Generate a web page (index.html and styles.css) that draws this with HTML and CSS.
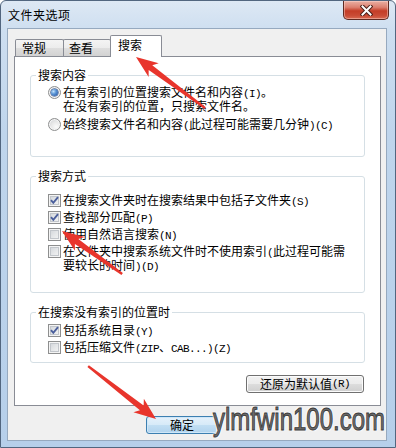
FILE: index.html
```html
<!DOCTYPE html>
<html lang="zh-CN">
<head>
<meta charset="utf-8">
<title>文件夹选项</title>
<link rel="stylesheet" href="styles.css">
</head>
<body>
<div class="window">
  <div class="titlebar">
    <span class="title">文件夹选项</span>
    <div class="close">
      <svg width="13" height="11" viewBox="0 0 13 11"><path d="M2.5 1.5 L10.5 9.5 M10.5 1.5 L2.5 9.5" stroke="#4a1f18" stroke-width="4" stroke-linecap="square" fill="none"/><path d="M2.5 1.5 L10.5 9.5 M10.5 1.5 L2.5 9.5" stroke="#ffffff" stroke-width="2" stroke-linecap="square" fill="none"/></svg>
    </div>
  </div>
  <div class="client">
    <div class="tabs">
      <div class="tab first">常规</div>
      <div class="tab">查看</div>
      <div class="tab active">搜索</div>
    </div>
    <div class="panel">
      <fieldset class="group g1">
        <legend>搜索内容</legend>
        <div class="body">
          <div class="opt"><span class="radio on"></span><span class="lbl">在有索引的位置搜索文件名和内容<span class="en">(I)</span>。<br>在没有索引的位置，只搜索文件名。</span></div>
          <div class="opt"><span class="radio"></span><span class="lbl">始终搜索文件名和内容<span class="en">(</span>此过程可能需要几分钟<span class="en">)(C)</span></span></div>
        </div>
      </fieldset>
      <fieldset class="group g2">
        <legend>搜索方式</legend>
        <div class="body">
          <div class="opt"><span class="cb on"><svg width="11" height="11" viewBox="0 0 11 11"><path d="M2 5.2 L4.3 7.8 L9 2.2" stroke="#4b5f9c" stroke-width="1.9" fill="none"/></svg></span><span class="lbl">在搜索文件夹时在搜索结果中包括子文件夹<span class="en">(S)</span></span></div>
          <div class="opt"><span class="cb on"><svg width="11" height="11" viewBox="0 0 11 11"><path d="M2 5.2 L4.3 7.8 L9 2.2" stroke="#4b5f9c" stroke-width="1.9" fill="none"/></svg></span><span class="lbl">查找部分匹配<span class="en">(P)</span></span></div>
          <div class="opt"><span class="cb"></span><span class="lbl">使用自然语言搜索<span class="en">(N)</span></span></div>
          <div class="opt"><span class="cb"></span><span class="lbl">在文件夹中搜索系统文件时不使用索引<span class="en">(</span>此过程可能需<br>要较长的时间<span class="en">)(D)</span></span></div>
        </div>
      </fieldset>
      <fieldset class="group g3">
        <legend>在搜索没有索引的位置时</legend>
        <div class="body">
          <div class="opt"><span class="cb on"><svg width="11" height="11" viewBox="0 0 11 11"><path d="M2 5.2 L4.3 7.8 L9 2.2" stroke="#4b5f9c" stroke-width="1.9" fill="none"/></svg></span><span class="lbl">包括系统目录<span class="en">(Y)</span></span></div>
          <div class="opt"><span class="cb"></span><span class="lbl">包括压缩文件<span class="en">(ZIP</span>、<span class="en">CAB...)(Z)</span></span></div>
        </div>
      </fieldset>
      <div class="panel-actions">
        <button class="btn reset">还原为默认值<span class="en">(R)</span></button>
      </div>
    </div>
    <div class="footer">
      <button class="btn default ok">确定</button>
    </div>
  </div>
</div>

<div class="overlay">
  <svg class="arrows" width="396" height="448" viewBox="0 0 396 448">
    <g fill="#e8352c">
      <polygon transform="translate(136 57) rotate(216.5)" points="0,0 -22,-8.5 -18,-3 -86,-1.2 -86,1.2 -18,3 -22,8.5"/>
      <polygon transform="translate(62 231) rotate(215.6)" points="0,0 -22,-8.5 -18,-3 -74,-1.2 -74,1.2 -18,3 -22,8.5"/>
      <polygon transform="translate(156 419) rotate(37.9)" points="0,0 -22,-8.5 -18,-3 -86,-1.2 -86,1.2 -18,3 -22,8.5"/>
    </g>
  </svg>
  <div class="wm">ylmfwin100.com</div>
</div>
</body>
</html>
```
FILE: styles.css
```css
* { box-sizing: border-box; }
html, body { margin: 0; padding: 0; }
body {
  width: 396px;
  height: 448px;
  overflow: hidden;
  position: relative;
  font-family: "Noto Sans CJK SC", "Liberation Sans", sans-serif;
  font-size: 12px;
  color: #000;
  background: #fff;
}

.window {
  width: 396px;
  height: 448px;
  border: 1px solid #52667f;
  border-radius: 6px 6px 0 0;
  background: linear-gradient(180deg, #dde8f4 0%, #cddef0 7%, #bfd5ec 30%, #b6cfea 100%);
  display: flex;
  flex-direction: column;
}

.titlebar {
  height: 27px;
  display: flex;
  align-items: flex-start;
  flex: none;
}
.title {
  margin: 7px 0 0 7px;
  line-height: 14px;
  letter-spacing: 0.5px;
}
.close {
  margin-left: auto;
  margin-right: 6px;
  width: 46px;
  height: 19px;
  border: 1px solid #5f2a22;
  border-top: none;
  border-radius: 0 0 5px 5px;
  background: linear-gradient(180deg, #eab0a4 0%, #dc8070 35%, #c43d27 55%, #c94b35 80%, #d96a52 100%);
  box-shadow: inset 0 0 0 1px rgba(255, 220, 210, 0.45);
  display: flex;
  align-items: center;
  justify-content: center;
}

.client {
  margin-left: 6px;
  width: 380px;
  height: 413px;
  border: 1px solid #96a9bf;
  background: #f0f0f0;
  padding-top: 6px;
  flex: none;
}

.tabs {
  display: flex;
  align-items: flex-end;
  height: 21px;
  padding-left: 7px;
}
.tab {
  width: 48px;
  height: 17px;
  margin-right: -1px;
  border: 1px solid #898c95;
  border-bottom: none;
  border-radius: 2px 2px 0 0;
  padding: 1px 0 0 5px;
  line-height: 14px;
  background: linear-gradient(180deg, #f4f4f4 0%, #ececec 50%, #dedede 50%, #d2d2d2 100%);
}
.tab.first { width: 49px; padding-left: 6px; }
.tab.active {
  width: 52px;
  height: 22px;
  margin-bottom: -1px;
  padding: 2px 0 0 7px;
  background: #fff;
  position: relative;
  z-index: 1;
}

.panel {
  margin-left: 6px;
  width: 367px;
  height: 350px;
  border: 1px solid #898c95;
  background: #fff;
  padding-top: 12px;
}

.group {
  margin: 0 15px;
  padding: 0;
  border: 1px solid #d5dfe5;
  border-radius: 3px;
  min-width: 0;
}
.group legend {
  margin-left: 5px;
  padding: 0 2px;
  line-height: 12px;
}
.group .body {
  display: flex;
  flex-direction: column;
  gap: 3px;
  padding-left: 17px;
}
.g1 .body { padding-top: 5px; padding-bottom: 24px; gap: 6px; }
.g2 { margin-top: 13px; }
.g2 .body { padding-top: 12px; padding-bottom: 19px; }
.g3 { margin-top: 13px; }
.g3 .body { padding-top: 6px; padding-bottom: 7px; }

.opt {
  display: flex;
  align-items: flex-start;
  line-height: 12px;
}
.lbl { white-space: nowrap; }
.en {
  font-family: "Liberation Mono", "DejaVu Sans Mono", monospace;
  font-size: 11px;
  letter-spacing: -0.6px;
}

.radio {
  flex: none;
  width: 13px;
  height: 13px;
  margin-right: 2px;
  border: 1px solid #8e8f8f;
  border-radius: 50%;
  background: radial-gradient(circle at 65% 70%, #fbfbfb 0%, #e8e8e8 45%, #c9ccd1 100%);
  box-shadow: inset 0 0 0 1px #f6f6f6;
  display: flex;
  align-items: center;
  justify-content: center;
}
.radio.on::after {
  content: "";
  width: 7px;
  height: 7px;
  border-radius: 50%;
  background: radial-gradient(circle at 35% 35%, #c5e4fb 0%, #5b95d6 40%, #1f4a99 100%);
  box-shadow: 0 0 0 0.5px #1b3b78;
}

.cb {
  flex: none;
  width: 13px;
  height: 13px;
  margin-right: 2px;
  border: 1px solid #8e8f8f;
  background: linear-gradient(135deg, #cdd1d6 0%, #e4e6e8 50%, #f7f7f7 100%);
  box-shadow: inset 0 0 0 1px #f4f4f4, inset 0 0 0 2px #c2c6cb;
  display: flex;
  align-items: center;
  justify-content: center;
}

.panel-actions {
  display: flex;
  justify-content: flex-end;
  margin-top: 12px;
  padding-right: 16px;
}

.btn {
  font-family: inherit;
  font-size: 12px;
  line-height: 16px;
  height: 18px;
  padding: 0;
  color: #000;
  border: 1px solid #707070;
  border-radius: 3px;
  background: linear-gradient(180deg, #f2f2f2 0%, #ebebeb 50%, #dddddd 50%, #cfcfcf 100%);
  box-shadow: inset 0 0 0 1px #fbfbfb;
  display: flex;
  align-items: center;
  justify-content: center;
}
.btn.reset { width: 118px; }
.btn.ok { width: 72px; }
.btn.default {
  border-color: #3c7fb1;
  background: linear-gradient(180deg, #e5f1fb 0%, #d6eaf8 50%, #c2dff3 50%, #b0d3ee 100%);
  box-shadow: inset 0 0 0 1px #cfe7f8;
}

.footer {
  display: flex;
  padding-left: 138px;
  margin-top: 10px;
}

.overlay {
  position: absolute;
  left: 0;
  top: 0;
  width: 396px;
  height: 448px;
  pointer-events: none;
}
.arrows { position: absolute; left: 0; top: 0; }
.wm {
  position: absolute;
  left: 213px;
  top: 403px;
  font-family: "Liberation Sans", Arial, sans-serif;
  font-size: 32px;
  line-height: 32px;
  white-space: nowrap;
  transform: scaleX(0.75);
  transform-origin: 0 0;
  color: #6e6e6e;
  -webkit-text-stroke: 1px #3a3a3a;
  text-shadow: 0 0 2px #fff, 0 0 2px #fff, 1px 1px 2px #fff, -1px -1px 2px #fff;
}
```
